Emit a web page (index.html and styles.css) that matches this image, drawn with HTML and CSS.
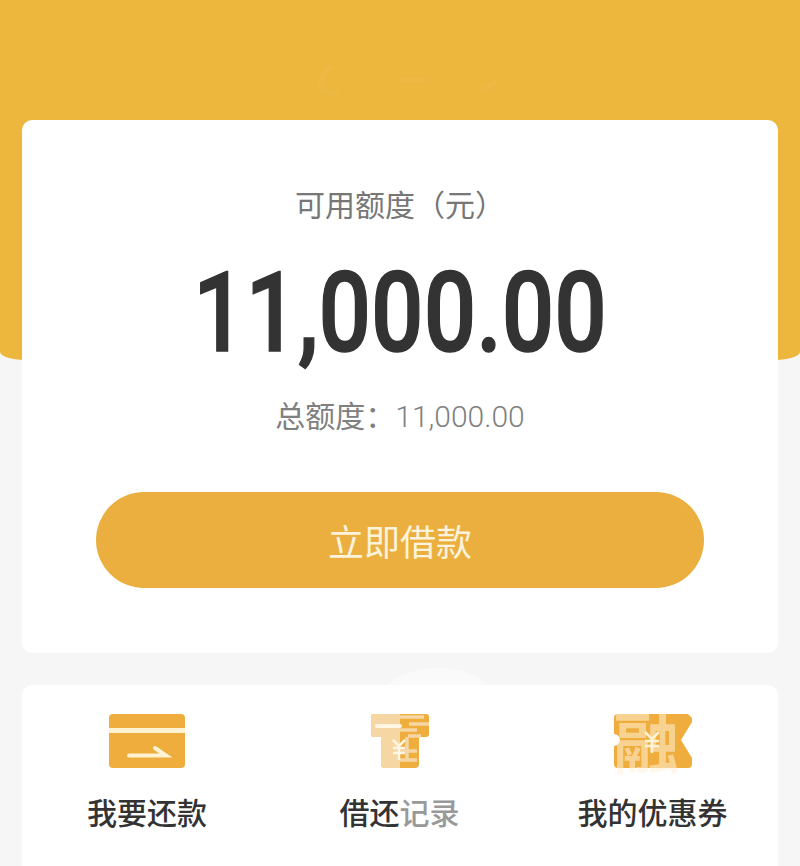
FILE: index.html
```html
<!DOCTYPE html>
<html lang="zh-CN">
<head>
<meta charset="utf-8">
<title>额度</title>
<link rel="stylesheet" href="styles.css">
</head>
<body>
<main class="page">
  <svg class="mark" viewBox="0 0 220 50" aria-hidden="true">
    <path d="M14 36 Q16 24 28 16 M16 38 Q24 44 34 46" />
    <path d="M92 30 H122" />
    <path d="M176 40 L192 32" />
  </svg>
  <section class="quota">
    <p class="quota-label">可用额度（元）</p>
    <p class="quota-amount">11,000.00</p>
    <p class="quota-total">总额度：<span class="quota-total-num">11,000.00</span></p>
    <button class="borrow">立即借款</button>
  </section>
  <div class="glow"></div>
  <nav class="actions">
    <a class="action action-repay">
      <svg class="icon" width="76" height="54" viewBox="0 0 76 54" aria-hidden="true">
        <rect width="76" height="54" rx="4" fill="#eead3d"/>
        <rect y="14" width="76" height="5" fill="#fff3d2"/>
        <path d="M20 41.500H57L46 34" fill="none" stroke="#fff3d2" stroke-width="4" stroke-linecap="round"/>
      </svg>
      <span class="action-name">我要还款</span>
    </a>
    <a class="action action-record">
      <svg class="icon" width="58" height="54" viewBox="0 0 58 54" aria-hidden="true">
        <path d="M3 0H55a3 3 0 0 1 3 3V20a3 3 0 0 1-3 3H48V50a4 4 0 0 1-4 4H14a4 4 0 0 1-4-4V23H3a3 3 0 0 1-3-3V3a3 3 0 0 1 3-3Z" fill="#eead3d"/>
        <path d="M3 0H29V54H14a4 4 0 0 1-4-4V23H3a3 3 0 0 1-3-3V3a3 3 0 0 1 3-3Z" fill="#f6d6a3"/>
        <rect x="4" y="10" width="27" height="4" rx="2" fill="#fff6e4"/>
        <path d="M29 3H53M38 10H58M29 16H46M37 22H50M36 23V46M29 37H46M29 46H46" fill="none" stroke="#f6d6a3" stroke-width="3.500"/>
        <path d="M22 26L28 32L34 26M28 32V46M22 34H34M22 39H34" fill="none" stroke="#fff6e4" stroke-width="2.500"/>
      </svg>
      <span class="action-name">借还<span class="action-name-faded">记录</span></span>
    </a>
    <a class="action action-coupon">
      <span class="icon-wrap">
        <svg class="icon" width="78" height="54" viewBox="0 0 78 54" aria-hidden="true">
          <path d="M4 0H74L78 4 V8 L67 26 L78 44 V50a4 4 0 0 1-4 4H4a4 4 0 0 1-4-4V32a6 6 0 0 0 0-12V4a4 4 0 0 1 4-4Z" fill="#eead3d"/>
          <path d="M31 18L38 25L45 18M38 25V39M31 27H45M31 32H45" fill="none" stroke="#fff3d2" stroke-width="2.500"/>
        </svg>
        <span class="stamp">融</span>
      </span>
      <span class="action-name">我的优惠券</span>
    </a>
  </nav>
</main>
</body>
</html>
```
FILE: styles.css
```css
* {
  box-sizing: border-box;
}

html,
body {
  margin: 0;
  height: 866px;
  overflow: hidden;
  background: #f6f6f6;
}

body {
  font-family: "Noto Sans CJK SC", "Noto Sans", sans-serif;
}

.page {
  position: relative;
  height: 866px;
  padding: 120px 22px 0;
  display: flex;
  flex-direction: column;
  gap: 32px;
  overflow: hidden;
}

/* Yellow header sitting behind the quota card */
.page::before {
  content: "";
  position: absolute;
  left: 0;
  top: 0;
  width: 100%;
  height: 360px;
  background: #edb63d;
  border-radius: 0 0 28px 28px / 0 0 8px 8px;
}

.mark {
  position: absolute;
  left: 305px;
  top: 50px;
  width: 220px;
  height: 50px;
  fill: none;
  stroke: #f0bc50;
  stroke-width: 5;
  opacity: 0.45;
}

.quota {
  position: relative;
  flex: none;
  height: 533px;
  background: #fff;
  border-radius: 10px;
  display: flex;
  flex-direction: column;
  align-items: center;
}

.quota p {
  margin: 0;
}

.quota .quota-label {
  margin-top: 62px;
  font-size: 30px;
  line-height: 42px;
  color: #777;
}

/* Tall condensed numerals */
.quota .quota-amount {
  margin-top: 31px;
  font-family: Roboto, "Liberation Sans", sans-serif;
  font-size: 112px;
  font-weight: 500;
  line-height: 116px;
  color: #333;
  -webkit-text-stroke: 1.5px #333;
  transform: scaleX(0.825);
}

.quota .quota-total {
  margin-top: 22px;
  font-size: 30px;
  line-height: 42px;
  color: #808080;
}

.quota-total-num {
  font-family: Roboto, "Liberation Sans", sans-serif;
  font-weight: 300;
  font-size: 30px;
}

.borrow {
  margin-top: 54px;
  width: 608px;
  height: 96px;
  border: 0;
  border-radius: 48px;
  background: #eaaf3e;
  color: #fdf3dc;
  font-family: inherit;
  font-size: 36px;
}

.glow {
  position: absolute;
  left: 383px;
  top: 668px;
  width: 110px;
  height: 60px;
  border-radius: 50%;
  background: #fafafa;
}

.actions {
  position: relative;
  flex: none;
  height: 200px;
  background: #fff;
  border-radius: 10px;
  display: grid;
  grid-template-columns: 250px 255px 251px;
  padding-top: 29px;
  align-items: start;
}

.action {
  display: flex;
  flex-direction: column;
  align-items: center;
  gap: 21px;
}

.icon {
  display: block;
}

.icon-wrap {
  position: relative;
  display: block;
}

.stamp {
  position: absolute;
  left: 0;
  top: -9px;
  font-size: 66px;
  line-height: 68px;
  font-weight: 700;
  color: rgba(255, 240, 215, 0.55);
}

.action-name {
  font-size: 30px;
  line-height: 44px;
  font-weight: 500;
  color: #333;
}

.action-name-faded {
  color: #999;
}
```
